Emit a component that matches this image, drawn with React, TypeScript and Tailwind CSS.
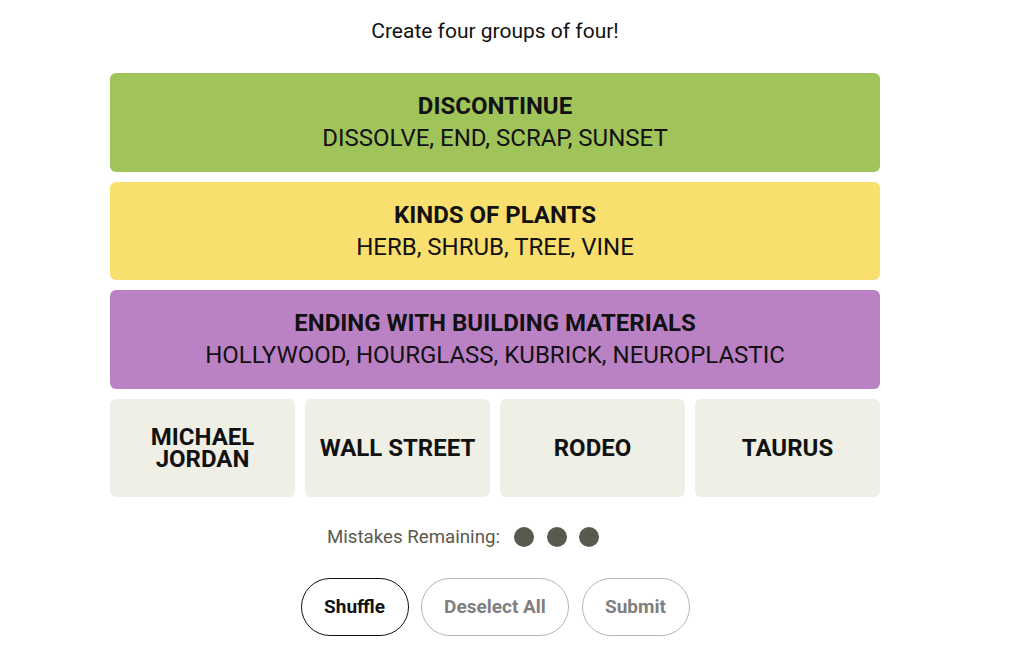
import React from "react";

const solved = [
  { title: "DISCONTINUE", words: "DISSOLVE, END, SCRAP, SUNSET", bg: "bg-[#a0c35a]" },
  { title: "KINDS OF PLANTS", words: "HERB, SHRUB, TREE, VINE", bg: "bg-[#f9df6d]" },
  { title: "ENDING WITH BUILDING MATERIALS", words: "HOLLYWOOD, HOURGLASS, KUBRICK, NEUROPLASTIC", bg: "bg-[#ba81c5]" },
];

const tiles = ["MICHAEL JORDAN", "WALL STREET", "RODEO", "TAURUS"];

export default function App() {
  return (
    <div className="w-[990px] min-h-[670px] bg-white flex flex-col items-center text-[#121212]" style={{ fontFamily: "Roboto, 'Liberation Sans', Arial, sans-serif" }}>
      <p className="mt-[19px] text-[21px] leading-[24px]">Create four groups of four!</p>
      <div className="mt-[30px] w-[770px] flex flex-col gap-[10px]">
        {solved.map((s) => (
          <div key={s.title} className={`${s.bg} h-[98.5px] rounded-[6px] flex flex-col items-center justify-center`}>
            <div className="text-[24px] leading-[32px] font-bold">{s.title}</div>
            <div className="text-[24px] leading-[32px]">{s.words}</div>
          </div>
        ))}
        <div className="grid grid-cols-4 gap-[10px]">
          {tiles.map((t) => (
            <div key={t} className="bg-[#efefe6] h-[98.5px] rounded-[6px] flex items-center justify-center text-center px-[4px]">
              <span className={`text-[24px] font-bold leading-[22px] ${t === "MICHAEL JORDAN" ? "w-[110px]" : "whitespace-nowrap"}`}>{t}</span>
            </div>
          ))}
        </div>
      </div>
      <div className="mt-[28px] pr-[64px] flex items-center text-[#5a594e]">
        <span className="text-[18.7px] leading-[24px] mr-[14px]">Mistakes Remaining:</span>
        <div className="flex gap-[12.5px]">
          <span className="w-[20px] h-[20px] rounded-full bg-[#5a594e]" />
          <span className="w-[20px] h-[20px] rounded-full bg-[#5a594e]" />
          <span className="w-[20px] h-[20px] rounded-full bg-[#5a594e]" />
        </div>
      </div>
      <div className="mt-[29px] flex gap-[12.5px]">
        <button className="w-[108px] h-[58px] rounded-full border border-[#121212] text-[19px] font-bold text-[#121212]">Shuffle</button>
        <button className="w-[148px] h-[58px] rounded-full border border-[#b5b5b5] text-[19px] font-bold text-[#7f7f7f]">Deselect All</button>
        <button className="w-[108px] h-[58px] rounded-full border border-[#b5b5b5] text-[19px] font-bold text-[#7f7f7f]">Submit</button>
      </div>
    </div>
  );
}
